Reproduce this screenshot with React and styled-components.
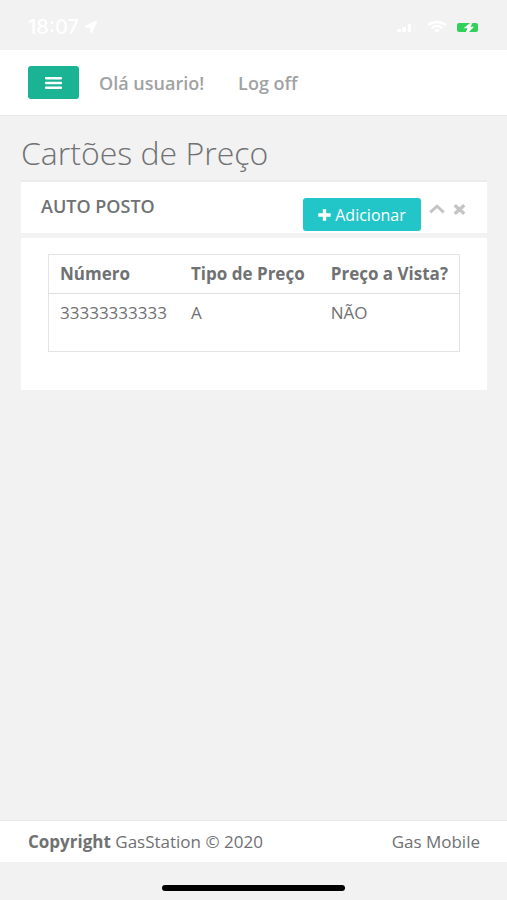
import React from "react";
import styled, { createGlobalStyle } from "styled-components";
import { FaLocationArrow } from "react-icons/fa";

const GlobalStyle = createGlobalStyle`
  * { box-sizing: border-box; }
  body {
    margin: 0;
    background: #f2f2f2;
    color: #6f7173;
    font-family: "Open Sans", "Noto Sans", sans-serif;
    font-size: 17px;
    line-height: 24px;
  }
  button { font: inherit; border: 0; cursor: pointer; }
`;

const Page = styled.div`
  display: flex;
  flex-direction: column;
  min-height: 100vh;
`;

const StatusBar = styled.div`
  display: flex;
  align-items: center;
  justify-content: space-between;
  height: 50px;
  padding: 4px 28px 0;
  color: #fff;
`;

const StatusGroup = styled.div`
  display: flex;
  align-items: center;
  gap: ${({ $gap }) => $gap}px;
`;

const Clock = styled.span`
  font-family: Inter, sans-serif;
  font-size: 20px;
  font-weight: 500;
`;

const Navbar = styled.nav`
  display: flex;
  align-items: center;
  height: 66px;
  padding: 0 28px;
  background: #fff;
  border-bottom: 1px solid #e7eaec;
`;

const MenuButton = styled.button`
  display: flex;
  align-items: center;
  justify-content: center;
  width: 51px;
  height: 33px;
  margin-right: 20px;
  padding: 0;
  border-radius: 3px;
  background: #1ab394;
  color: #fff;
`;

const NavLink = styled.a`
  margin-right: 34px;
  color: #a0a2a3;
  font-size: 18px;
  font-weight: 600;
  text-decoration: none;
  white-space: nowrap;
`;

const Content = styled.main`
  flex: 1;
  padding: 17px 20px 0 21px;
`;

const Title = styled.h1`
  margin: 0 0 7px;
  font-size: 32px;
  font-weight: 300;
  line-height: 40px;
`;

const PanelHeader = styled.header`
  display: flex;
  align-items: flex-start;
  height: 53px;
  padding: 12px 20px 0;
  background: #fff;
  border-top: 2px solid #e9ebec;
`;

const PanelTitle = styled.h2`
  flex: 1;
  margin: 0;
  font-size: 18px;
  font-weight: 600;
  line-height: 24px;
`;

const AddButton = styled.button`
  display: flex;
  align-items: center;
  justify-content: center;
  gap: 4px;
  width: 118px;
  height: 33px;
  margin: 4px 8px 0 0;
  padding: 0;
  border-radius: 3px;
  background: #23c6c8;
  color: #fff;
  font-size: 16px;
`;

const ToolButton = styled.button`
  display: flex;
  align-items: center;
  justify-content: center;
  width: 16px;
  height: 16px;
  margin: 7px 0 0 ${({ $gap }) => $gap || 0}px;
  padding: 0;
  background: none;
  color: #c4c4c4;
`;

const PanelBody = styled.section`
  margin-top: 5px;
  padding: 16px 27px 38px;
  background: #fff;
`;

const Table = styled.table`
  width: 100%;
  table-layout: fixed;
  border: 1px solid #e4e4e4;
  border-collapse: collapse;
`;

const HeadCell = styled.th`
  width: ${({ $width }) => $width};
  height: 39px;
  padding: 0 0 0 11px;
  border-bottom: 1px solid #ddd;
  font-weight: 700;
  text-align: left;
  white-space: nowrap;
`;

const Cell = styled.td`
  height: 58px;
  padding: 7px 0 0 11px;
  text-align: left;
  vertical-align: top;
`;

const Footer = styled.footer`
  display: flex;
  justify-content: space-between;
  padding: 9px 27px 8px 28px;
  background: #fff;
  border-top: 1px solid #e7eaec;
`;

const HomeArea = styled.div`
  display: flex;
  justify-content: center;
  height: 38px;
  padding-top: 23px;
`;

const HomeIndicator = styled.div`
  width: 36%;
  height: 6px;
  border-radius: 3px;
  background: #000;
`;

const columns = [
  { label: "Número", width: "32%" },
  { label: "Tipo de Preço", width: "34%" },
  { label: "Preço a Vista?", width: "34%" },
];
const rows = [["33333333333", "A", "NÃO"]];

function BarsIcon() {
  return (
    <svg width="17" height="12" viewBox="0 0 17 12" fill="currentColor" aria-hidden="true">
      <rect width="17" height="2.400" rx="0.800" />
      <rect y="4.800" width="17" height="2.400" rx="0.800" />
      <rect y="9.600" width="17" height="2.400" rx="0.800" />
    </svg>
  );
}

function PlusIcon() {
  return (
    <svg width="13" height="12" viewBox="0 0 13 12" fill="none" stroke="currentColor" strokeWidth="3.400" aria-hidden="true">
      <path d="M6.500 0.300V11.700M0.300 6H12.700" />
    </svg>
  );
}

function ChevronUpIcon() {
  return (
    <svg width="16" height="10" viewBox="0 0 16 10" fill="none" stroke="currentColor" strokeWidth="2.800" aria-hidden="true">
      <path d="M1.200 8.400L8 2.200L14.800 8.400" />
    </svg>
  );
}

function CloseIcon() {
  return (
    <svg width="13" height="11" viewBox="0 0 13 11" fill="none" stroke="currentColor" strokeWidth="3.400" aria-hidden="true">
      <path d="M1.700 1.300L11.300 9.700M11.300 1.300L1.700 9.700" />
    </svg>
  );
}

function SignalIcon() {
  return (
    <svg width="20" height="10" viewBox="0 0 20 10" aria-hidden="true">
      <rect x="0" y="7" width="4" height="3" rx="1" fill="#fff" />
      <rect x="5" y="5" width="4" height="5" rx="1" fill="#fff" />
      <rect x="11" y="2" width="3" height="8" rx="1" fill="#fff" />
      <rect x="16" y="0" width="3" height="10" rx="1" fill="#f4f4f4" />
    </svg>
  );
}

function WifiIcon() {
  return (
    <svg width="20" height="12" viewBox="0 0 20 12" fill="none" stroke="#fff" strokeWidth="2.4" aria-hidden="true">
      <path d="M1 4Q10-2 19 4M4.500 7.200Q10 3 15.500 7.200" />
      <path d="M7 9Q10 7 13 9L10 12Z" fill="#fff" stroke="none" />
    </svg>
  );
}

function BatteryIcon() {
  return (
    <svg width="22" height="9" viewBox="0 0 22 9" aria-hidden="true">
      <rect width="21" height="9" rx="2" fill="#30d158" />
      <path d="M14.500 -1L6.500 5.200H10.500L8.500 10H11L17 3.800H13.500L16 -1Z" fill="#fff" />
    </svg>
  );
}

export default function App() {
  return (
    <>
      <GlobalStyle />
      <Page>
        <StatusBar>
          <StatusGroup $gap={6}>
            <Clock>18:07</Clock>
            <FaLocationArrow size={12} />
          </StatusGroup>
          <StatusGroup $gap={10}>
            <SignalIcon />
            <WifiIcon />
            <BatteryIcon />
          </StatusGroup>
        </StatusBar>
        <Navbar>
          <MenuButton type="button" aria-label="Menu">
            <BarsIcon />
          </MenuButton>
          <NavLink href="#usuario">Olá usuario!</NavLink>
          <NavLink href="#logoff">Log off</NavLink>
        </Navbar>
        <Content>
          <Title>Cartões de Preço</Title>
          <PanelHeader>
            <PanelTitle>AUTO POSTO</PanelTitle>
            <AddButton type="button">
              <PlusIcon />
              Adicionar
            </AddButton>
            <ToolButton type="button" aria-label="Recolher">
              <ChevronUpIcon />
            </ToolButton>
            <ToolButton type="button" aria-label="Fechar" $gap={6}>
              <CloseIcon />
            </ToolButton>
          </PanelHeader>
          <PanelBody>
            <Table>
              <thead>
                <tr>
                  {columns.map((c) => (
                    <HeadCell key={c.label} scope="col" $width={c.width}>{c.label}</HeadCell>
                  ))}
                </tr>
              </thead>
              <tbody>
                {rows.map((row) => (
                  <tr key={row[0]}>
                    {row.map((value) => (
                      <Cell key={value}>{value}</Cell>
                    ))}
                  </tr>
                ))}
              </tbody>
            </Table>
          </PanelBody>
        </Content>
        <Footer>
          <span><strong>Copyright</strong> GasStation © 2020</span>
          <span>Gas Mobile</span>
        </Footer>
        <HomeArea>
          <HomeIndicator />
        </HomeArea>
      </Page>
    </>
  );
}
